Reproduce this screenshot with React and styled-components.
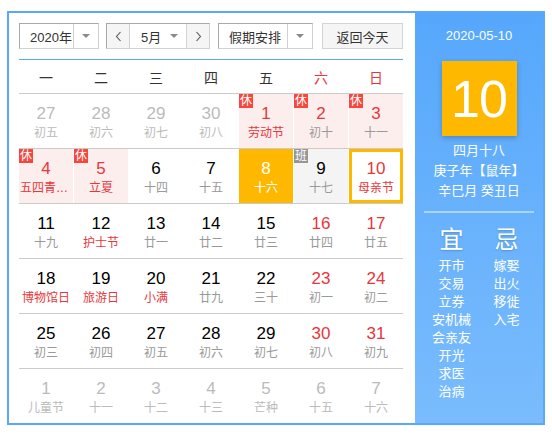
import React from "react";
import styled, { createGlobalStyle, css } from "styled-components";

const Global = createGlobalStyle`
    body {
        margin: 0;
        background: #fff;
        font-family: "Liberation Sans", "Noto Sans CJK SC", sans-serif;
    }
`;

const Wrap = styled.div`
    display: flex;
    width: 538px;
    height: 414px;
    box-sizing: border-box;
    margin: 11px 0 0 7px;
    border: 2px solid #58a8fb;
`;

const Main = styled.div`
    width: 406px;
    box-sizing: border-box;
    padding: 10px 12px 0 10px;
    background: #fff;
`;

const Toolbar = styled.div`
    display: flex;
    height: 26px;
    margin-bottom: 10px;
    font-size: 13px;
    color: #333;
`;

const Select = styled.div`
    display: flex;
    width: ${props => props.w}px;
    margin-right: ${props => props.gap || 0}px;
    box-sizing: border-box;
    border: 1px solid;
    border-color: #a9a9a9 #d2d2d2 #d2d2d2 #a9a9a9;
    background: #fff;
`;

const SelectText = styled.span`
    flex: 1;
    display: flex;
    align-items: center;
    padding-left: ${props => props.pad || 10}px;
`;

const CaretBox = styled.span`
    width: 24px;
    display: flex;
    align-items: center;
    justify-content: center;
    border-left: ${props => props.divided ? '1px solid #d2d2d2' : 'none'};
    &::after {
        content: "";
        border-left: 4px solid transparent;
        border-right: 4px solid transparent;
        border-top: 4px solid #8a8a8a;
    }
`;

const NavBtn = styled.span`
    width: 22px;
    display: flex;
    align-items: center;
    justify-content: center;
    background: #f5f5f5;
    ${props => props.side === 'left' ? css`border-right: 1px solid #d2d2d2;` : css`border-left: 1px solid #d2d2d2;`}
`;

const TodayBtn = styled.div`
    width: 81px;
    box-sizing: border-box;
    display: flex;
    align-items: center;
    justify-content: center;
    background: #f5f5f5;
    border: 1px solid #d4d4d4;
`;

const Week = styled.div`
    display: grid;
    grid-template-columns: repeat(7, 54px);
    column-gap: 1px;
    height: 33px;
    align-items: center;
    border-top: 1px solid #5aa6ef;
    border-bottom: 1px solid #cbcbcb;
    font-size: 14px;
    text-align: center;
`;

const WeekDay = styled.span`
    color: ${props => props.red ? '#e8363b' : '#333'};
`;

const Row = styled.div`
    display: grid;
    grid-template-columns: repeat(7, 54px);
    column-gap: 1px;
    height: 54px;
    border-bottom: ${props => props.last ? 'none' : '1px solid #cbcbcb'};
`;

const Cell = styled.div`
    position: relative;
    box-sizing: border-box;
    padding: 10px 1px 0;
    text-align: center;
    background: ${props => props.active ? '#ffb800' : props.holiday ? '#fdeeee' : props.work ? '#f4f4f4' : '#fff'};
    box-shadow: ${props => props.today ? 'inset 0 0 0 3px #ffb800' : 'none'};
`;

const Num = styled.div`
    font-size: 17px;
    line-height: 20px;
    color: ${props => props.active ? '#fff' : props.muted ? '#bbb' : props.red ? '#e8363b' : '#000'};
`;

const Lunar = styled.div`
    font-size: 12px;
    line-height: 18px;
    white-space: nowrap;
    overflow: hidden;
    text-overflow: ellipsis;
    color: ${props => props.active ? '#fff' : props.muted ? '#bbb' : props.red ? '#e8363b' : '#999'};
`;

const Badge = styled.span`
    position: absolute;
    top: 0;
    left: 0;
    width: 14px;
    height: 14px;
    font-size: 12px;
    line-height: 14px;
    color: #fff;
    background: ${props => props.work ? '#969696' : '#f5473e'};
`;

const Side = styled.div`
    width: 128px;
    display: flex;
    flex-direction: column;
    align-items: center;
    padding-top: 13px;
    color: #fff;
    background: linear-gradient(#56a7fc, #7abcfd);
`;

const DateText = styled.div`
    font-size: 13px;
    line-height: 20px;
`;

const BigDay = styled.div`
    width: 75px;
    height: 75px;
    margin-top: 15px;
    display: flex;
    align-items: center;
    justify-content: center;
    background: #ffb800;
    box-shadow: 0 2px 5px rgba(0, 0, 0, 0.22);
    font-size: 52px;
    font-weight: 300;
    letter-spacing: -1px;
`;

const LunarInfo = styled.div`
    margin-top: 5px;
    font-size: 13px;
    line-height: 20px;
    text-align: center;
`;

const Divider = styled.div`
    width: 110px;
    height: 2px;
    margin-top: 10px;
    background: rgba(255, 255, 255, 0.45);
`;

const Advice = styled.div`
    display: grid;
    grid-template-columns: 55px 55px;
    margin-top: 13px;
    text-align: center;
`;

const AdviceCol = styled.div`
    display: flex;
    flex-direction: column;
`;

const AdviceHead = styled.div`
    font-size: 24px;
    line-height: 28px;
    margin-bottom: 3px;
    text-shadow: 0 1px 2px rgba(0, 0, 0, 0.2);
`;

const AdviceItem = styled.div`
    font-size: 13px;
    line-height: 18px;
    white-space: nowrap;
`;

const Chevron = ({ dir }) => (
    <svg width="7" height="11" viewBox="0 0 7 11">
        <polyline
            points={dir === 'left' ? "5.5,1 1.5,5.5 5.5,10" : "1.5,1 5.5,5.5 1.5,10"}
            fill="none" stroke="#555" strokeWidth="1.1" />
    </svg>
);

const weekDays = ['一', '二', '三', '四', '五', '六', '日'];

// n: number, l: lunar text, m: other month, r: red number, lr: red lunar,
// h: holiday (休), w: workday (班), a: active, t: today
const weeks = [
    [{ n: 27, l: '初五', m: 1 }, { n: 28, l: '初六', m: 1 }, { n: 29, l: '初七', m: 1 }, { n: 30, l: '初八', m: 1 },
     { n: 1, l: '劳动节', r: 1, lr: 1, h: 1 }, { n: 2, l: '初十', r: 1, h: 1 }, { n: 3, l: '十一', r: 1, h: 1 }],
    [{ n: 4, l: '五四青年节', r: 1, lr: 1, h: 1 }, { n: 5, l: '立夏', r: 1, lr: 1, h: 1 }, { n: 6, l: '十四' }, { n: 7, l: '十五' },
     { n: 8, l: '十六', a: 1 }, { n: 9, l: '十七', w: 1 }, { n: 10, l: '母亲节', r: 1, lr: 1, t: 1 }],
    [{ n: 11, l: '十九' }, { n: 12, l: '护士节', lr: 1 }, { n: 13, l: '廿一' }, { n: 14, l: '廿二' },
     { n: 15, l: '廿三' }, { n: 16, l: '廿四', r: 1 }, { n: 17, l: '廿五', r: 1 }],
    [{ n: 18, l: '博物馆日', lr: 1 }, { n: 19, l: '旅游日', lr: 1 }, { n: 20, l: '小满', lr: 1 }, { n: 21, l: '廿九' },
     { n: 22, l: '三十' }, { n: 23, l: '初一', r: 1 }, { n: 24, l: '初二', r: 1 }],
    [{ n: 25, l: '初三' }, { n: 26, l: '初四' }, { n: 27, l: '初五' }, { n: 28, l: '初六' },
     { n: 29, l: '初七' }, { n: 30, l: '初八', r: 1 }, { n: 31, l: '初九', r: 1 }],
    [{ n: 1, l: '儿童节', m: 1 }, { n: 2, l: '十一', m: 1 }, { n: 3, l: '十二', m: 1 }, { n: 4, l: '十三', m: 1 },
     { n: 5, l: '芒种', m: 1 }, { n: 6, l: '十五', m: 1 }, { n: 7, l: '十六', m: 1 }],
];

const good = ['开市', '交易', '立券', '安机械', '会亲友', '开光', '求医', '治病'];
const bad = ['嫁娶', '出火', '移徙', '入宅'];

export default function App() {
    return (
        <>
            <Global />
            <Wrap>
                <Main>
                    <Toolbar>
                        <Select w={80} gap={7}>
                            <SelectText>2020年</SelectText>
                            <CaretBox divided />
                        </Select>
                        <Select w={104} gap={8}>
                            <NavBtn side="left"><Chevron dir="left" /></NavBtn>
                            <SelectText pad={11}>5月</SelectText>
                            <CaretBox />
                            <NavBtn side="right"><Chevron dir="right" /></NavBtn>
                        </Select>
                        <Select w={95} gap={9}>
                            <SelectText>假期安排</SelectText>
                            <CaretBox divided />
                        </Select>
                        <TodayBtn>返回今天</TodayBtn>
                    </Toolbar>
                    <Week>
                        {weekDays.map((d, i) => <WeekDay key={i} red={i > 4}>{d}</WeekDay>)}
                    </Week>
                    {weeks.map((week, wi) => (
                        <Row key={wi} last={wi === weeks.length - 1}>
                            {week.map((c, ci) => (
                                <Cell key={ci} holiday={c.h} work={c.w} active={c.a} today={c.t}>
                                    {c.h ? <Badge>休</Badge> : null}
                                    {c.w ? <Badge work>班</Badge> : null}
                                    <Num muted={c.m} red={c.r} active={c.a}>{c.n}</Num>
                                    <Lunar muted={c.m} red={c.lr} active={c.a}>{c.l}</Lunar>
                                </Cell>
                            ))}
                        </Row>
                    ))}
                </Main>
                <Side>
                    <DateText>2020-05-10</DateText>
                    <BigDay>10</BigDay>
                    <LunarInfo>
                        <div>四月十八</div>
                        <div>庚子年【鼠年】</div>
                        <div>辛巳月 癸丑日</div>
                    </LunarInfo>
                    <Divider />
                    <Advice>
                        <AdviceCol>
                            <AdviceHead>宜</AdviceHead>
                            {good.map(g => <AdviceItem key={g}>{g}</AdviceItem>)}
                        </AdviceCol>
                        <AdviceCol>
                            <AdviceHead>忌</AdviceHead>
                            {bad.map(b => <AdviceItem key={b}>{b}</AdviceItem>)}
                        </AdviceCol>
                    </Advice>
                </Side>
            </Wrap>
        </>
    );
}
